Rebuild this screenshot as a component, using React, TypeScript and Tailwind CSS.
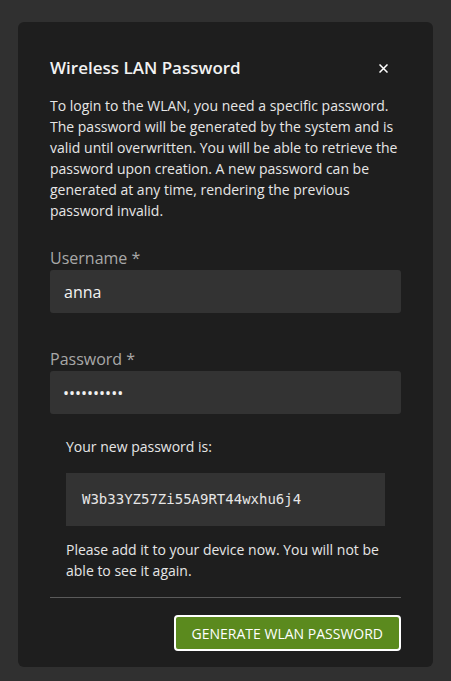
const App = () => {
    return (
        <div className="min-h-[681px] bg-[#303030] px-[18px] pt-[22px] pb-[15px]" style={{ fontFamily: '"Open Sans", sans-serif' }}>
            <div className="bg-[#1e1e1e] rounded-md px-8 pt-[34px] pb-4">
                <div className="flex items-center justify-between h-6">
                    <h2 className="text-[17px] font-semibold text-[#f2f2f2]">Wireless LAN Password</h2>
                    <button className="w-8 h-6 flex items-center justify-center text-white mr-[2px]">
                        <svg width="9" height="9" viewBox="0 0 9 9" stroke="white" strokeWidth="1.5">
                            <path d="M0.5 0.5 L8.5 8.5 M8.5 0.5 L0.5 8.5" />
                        </svg>
                    </button>
                </div>
                <p className="mt-[15px] text-[14px] leading-[21px] text-[#e6e6e6]">
                    To login to the WLAN, you need a specific password. The password will be generated by the system and is valid until overwritten. You will be able to retrieve the password upon creation. A new password can be generated at any time, rendering the previous password invalid.
                </p>
                <div className="mt-[25px]">
                    <label className="block text-[16px] leading-6 text-[#a8a8a8]">Username *</label>
                    <div className="h-[43px] bg-[#333333] rounded-[3px] px-[14px] flex items-center text-[16px] text-[#f2f2f2]">anna</div>
                </div>
                <div className="mt-[34px]">
                    <label className="block text-[16px] leading-6 text-[#a8a8a8]">Password *</label>
                    <div className="h-[43px] bg-[#333333] rounded-[3px] pl-[13px] pr-[14px] flex items-center text-[16px] text-[#f2f2f2]">••••••••••</div>
                </div>
                <div className="px-4 pt-[22px]">
                    <p className="text-[14px] leading-[21px] text-[#e6e6e6]">Your new password is:</p>
                    <div className="mt-[16px] h-[53px] bg-[#333333] px-4 flex items-center text-[14px] text-[#e6e6e6]" style={{ fontFamily: '"DejaVu Sans Mono", monospace' }}>
                        W3b33YZ57Zi55A9RT44wxhu6j4
                    </div>
                    <p className="mt-[13px] text-[14px] leading-[21px] text-[#e6e6e6]">
                        Please add it to your device now. You will not be able to see it again.
                    </p>
                </div>
                <div className="mt-[16px] border-t border-[#5a5a5a]"></div>
                <div className="flex justify-end mt-[17px]">
                    <button className="h-[36px] px-4 bg-[#5b8a1e] border-2 border-white rounded-[4px] text-[14px] text-white">
                        GENERATE WLAN PASSWORD
                    </button>
                </div>
            </div>
        </div>
    )
}

export default App
